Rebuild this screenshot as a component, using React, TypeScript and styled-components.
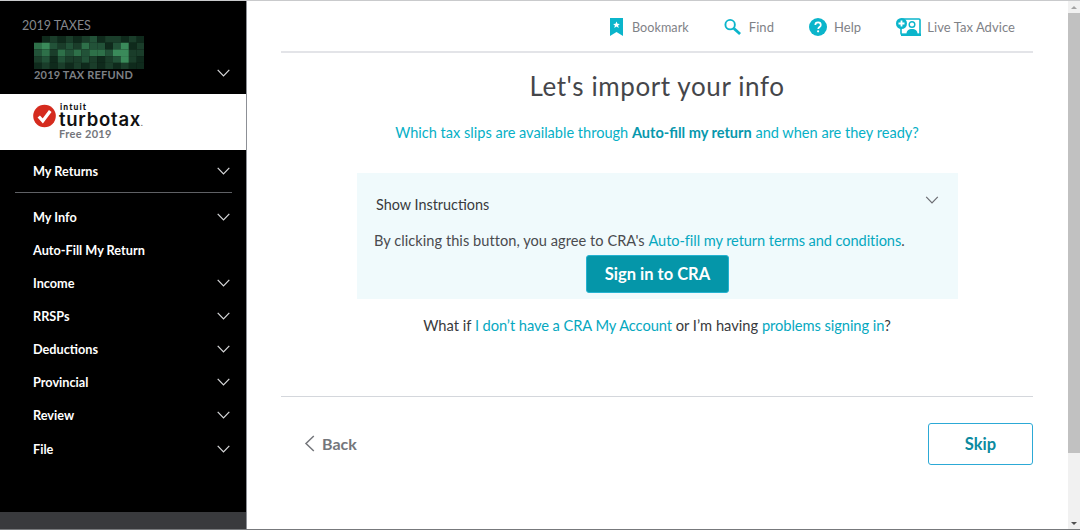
import React from "react";
import styled, { createGlobalStyle } from "styled-components";

const Global = createGlobalStyle`
  html, body { margin: 0; padding: 0; height: 100%; overflow: hidden; background: #fff; }
  #root { height: 100%; }
  * { box-sizing: border-box; }
`;

const Page = styled.div`
  width: 1080px; height: 530px; display: flex;
  border-top: 1px solid #c9cacc; border-bottom: 1px solid #77797c;
  font-family: "Lato", "Liberation Sans", sans-serif; color: #393a3d;
`;
const Sidebar = styled.aside`
  width: 247px; flex: none; background: #000; display: flex; flex-direction: column;
  border-right: 1px solid #8d9096;
`;
const Summary = styled.div`
  height: 93px; position: relative; padding: 17px 0 0 22px; color: #85888d;
  font-size: 12.5px; line-height: 16px; font-weight: 400;
`;
const Mosaic = styled.svg`
  position: absolute; left: 34px; top: 35px; z-index: 1; filter: blur(0.7px);
`;
const RefundRow = styled.div`
  position: absolute; left: 34px; right: 16px; top: 66px; height: 16px;
  display: flex; align-items: center; justify-content: space-between;
  font-size: 11px; letter-spacing: 0.2px; color: #7d8085; font-weight: 700;
`;
const RefundChevron = styled.span`
  display: flex; margin-top: -4px;
`;
const LogoBar = styled.div`
  height: 56px; background: #fff; display: flex; padding: 9px 0 0 33px; gap: 3px;
`;
const LogoText = styled.div`
  display: flex; flex-direction: column; color: #111;
`;
const Intuit = styled.span`
  font-size: 8.5px; line-height: 8px; font-weight: 900; letter-spacing: 1.1px; margin-left: 1px;
`;
const Turbo = styled.span`
  font-family: "Inter", sans-serif;
  font-size: 18.5px; line-height: 14px; font-weight: 600; letter-spacing: 0.75px; margin-top: 1px;
  small { font-size: 8px; color: #74767b; letter-spacing: 0; margin-left: -0.5px; }
`;
const Free = styled.span`
  font-size: 11px; line-height: 13px; font-weight: 700; color: #74767b; letter-spacing: 0.35px; margin-top: -3px;
`;
const Nav = styled.nav`
  flex: 1; display: flex; flex-direction: column; padding: 4px 14px 0 15px;
`;
const NavRow = styled.div<{ $first?: boolean }>`
  height: 33.14px; flex: none; display: flex; align-items: center; justify-content: space-between;
  padding: 0 2px 0 18px; color: #fff; font-size: 12.7px; font-weight: 700;
  ${(p) => (p.$first ? "margin-bottom: 5px;" : "")}
`;
const Divider = styled.div`
  height: 1px; flex: none; background: #5f6165; margin-bottom: 7px;
`;
const SideFoot = styled.div`
  height: 17px; background: #393a3d;
`;
const Main = styled.main`
  flex: 1; min-width: 0; display: flex; flex-direction: column; padding: 0 35px 0 34px; background: #fff;
`;
const TopBar = styled.header`
  height: 52px; flex: none; display: flex; align-items: center; justify-content: flex-end;
  border-bottom: 2px solid #e3e4e8; padding: 2px 18px 0 0; gap: 35px; font-size: 13px;
  color: #7f8287;
`;
const TopItem = styled.div<{ $gap: number; $size?: number }>`
  display: flex; align-items: center; gap: ${(p) => p.$gap}px; letter-spacing: 0.06px;
  font-size: ${(p) => p.$size ?? 13}px;
`;
const Title = styled.h1`
  margin: 17px 0 0; font-size: 26px; line-height: 32px; font-weight: 400; text-align: center; color: #45464a;
  letter-spacing: 0.6px;
`;
const Lead = styled.p`
  margin: 21px 0 0; text-align: center; font-size: 14.55px; line-height: 20px; color: #06b0c6;
  b { font-weight: 700; color: #0898ad; }
`;
const Panel = styled.section`
  margin: 30px 75px 0 76px; height: 126px; background: #f0fafc; display: flex; flex-direction: column;
  align-items: center; position: relative; padding-top: 22px;
`;
const PanelHead = styled.div`
  align-self: stretch; padding-left: 19px; font-size: 14.4px; line-height: 20px; color: #393a3d;
`;
const ChevronSpot = styled.div`
  position: absolute; right: 19px; top: 23px; display: flex;
`;
const Agree = styled.p`
  margin: 16px 0 0; align-self: flex-start; padding-left: 17px; font-size: 14.6px; line-height: 20px; color: #4a4b4f;
  white-space: nowrap; letter-spacing: 0.04px;
`;
const A = styled.span`
  color: #06a8bf; letter-spacing: -0.08px;
`;
const SignIn = styled.button`
  margin-top: 4px; width: 143px; height: 38px; background: #0596a9; border: 1px solid #25b2d0; border-radius: 3px;
  color: #fff; font: 700 16.5px "Lato", sans-serif; padding: 0;
`;
const Help = styled.p`
  margin: 16px 0 0; text-align: center; font-size: 14.7px; line-height: 20px; color: #393a3d;
`;
const Footer = styled.footer`
  margin-top: 61px; border-top: 1px solid #d4d7dc; padding: 26px 0 0 23px; display: flex;
  align-items: center; justify-content: space-between;
`;
const Back = styled.div`
  display: flex; align-items: center; gap: 7px; color: #74767b; font-size: 16px; font-weight: 700;
  position: relative; top: -1px;
`;
const Skip = styled.button`
  width: 105px; height: 42px; background: #fff; border: 1px solid #2ca9d6; border-radius: 3px;
  color: #0c8aa0; font: 700 16.5px "Lato", sans-serif; padding: 0;
`;
const Scrollbar = styled.div`
  width: 12px; flex: none; background: #f1f1f1; display: flex; flex-direction: column; align-items: center;
`;
const Arrow = styled.div<{ $up?: boolean }>`
  height: 12px; flex: none; display: flex; align-items: center; justify-content: center;
  &::before { content: ""; border-left: 3px solid transparent; border-right: 3px solid transparent;
    ${(p) => (p.$up ? "border-bottom: 3px solid #a3a3a3;" : "border-top: 3px solid #505050;")} }
`;
const Thumb = styled.div`
  width: 100%; height: 440px; background: #c1c1c1;
`;
const Track = styled.div`
  flex: 1;
`;

const Chevron = ({ color = "#d8d9db", w = 13 }: { color?: string; w?: number }) => (
  <svg width={w} height={8} viewBox="0 0 13 8" fill="none" stroke={color} strokeWidth="1.2">
    <path d="M.7.8 6.5 6.8 12.3.8" />
  </svg>
);

const T = "#0bb5cb";
const greens = [
  "01212123122121",
  "45323243313512",
  "34243434435522",
  "23132232123521",
  "12121212121211",
];
const shade = ["#000000", "#0f2a1c", "#1a3d2a", "#225238", "#2e7049", "#3a8a5a"];

const rows = ["My Info", "Auto-Fill My Return", "Income", "RRSPs", "Deductions", "Provincial", "Review", "File"];

export default function App() {
  return (
    <Page>
      <Global />
      <Sidebar>
        <Summary>
          2019 TAXES
          <Mosaic width="110" height="33" viewBox="0 0 110 33">
            {greens.map((r, y) =>
              r.split("").map((c, x) => (
                <rect key={`${x}-${y}`} x={x * 7.9} y={y * 6.7} width="8" height="6.8" fill={shade[+c]} />
              ))
            )}
          </Mosaic>
          <RefundRow>
            2019 TAX REFUND
            <RefundChevron>
              <Chevron />
            </RefundChevron>
          </RefundRow>
        </Summary>
        <LogoBar>
          <svg width="23" height="24" viewBox="0 0 24 24" style={{ marginTop: 1, flex: "none" }}>
            <circle cx="12" cy="12" r="11.8" fill="#d52b1e" />
            <path d="M6 12.5l4.200 4.600L18 6.800" fill="none" stroke="#fff" strokeWidth="3.4" />
          </svg>
          <LogoText>
            <Intuit>intuit</Intuit>
            <Turbo>
              turbotax<small>.</small>
            </Turbo>
            <Free>Free 2019</Free>
          </LogoText>
        </LogoBar>
        <Nav>
          <NavRow $first>
            My Returns
            <Chevron />
          </NavRow>
          <Divider />
          {rows.map((r) => (
            <NavRow key={r}>
              {r}
              {r !== "Auto-Fill My Return" && <Chevron />}
            </NavRow>
          ))}
        </Nav>
        <SideFoot />
      </Sidebar>
      <Main>
        <TopBar>
          <TopItem $gap={9} $size={12.6}>
            <svg width="13" height="18" viewBox="0 0 13 18">
              <path fill={T} fillRule="evenodd" d="M0 0h13v18l-6.500-4L0 18zM6.500 3.400l-1 2.300-2.400.2 1.800 1.600-.6 2.400 2.200-1.300 2.200 1.300-.6-2.400 1.800-1.600-2.400-.2z" />
            </svg>
            Bookmark
          </TopItem>
          <TopItem $gap={8}>
            <svg width="17" height="18" viewBox="0 0 18 18" fill="none" stroke={T}>
              <circle cx="6.500" cy="6.500" r="5" strokeWidth="2" />
              <path d="M10.500 10.500 17 16.500" strokeWidth="3" />
            </svg>
            Find
          </TopItem>
          <TopItem $gap={7}>
            <svg width="18" height="18" viewBox="0 0 18 18">
              <circle cx="9" cy="9" r="9" fill={T} />
              <path d="M6.300 7c0-1.600 1.200-2.600 2.800-2.600S11.800 5.400 11.800 7c0 2-2.500 2-2.600 4" fill="none" stroke="#fff" strokeWidth="1.7" />
              <circle cx="9.100" cy="13.300" r="1.100" fill="#fff" />
            </svg>
            Help
          </TopItem>
          <TopItem $gap={6}>
            <svg width="25" height="18" viewBox="0 0 25 18" fill="none">
              <rect x="5" y="1" width="19" height="15.500" rx="1" stroke={T} strokeWidth="1.6" />
              <path d="M5 15.500h20V18H5z" fill={T} />
              <circle cx="5.500" cy="5.500" r="5.500" fill={T} />
              <path d="M5.500 2.500v6M2.500 5.500h6" stroke="#fff" strokeWidth="1.8" />
              <circle cx="16" cy="6.500" r="2.800" stroke={T} strokeWidth="1.4" />
              <path d="M10.500 16c0-3.500 2-5 5.500-5s5.500 1.500 5.500 5z" fill={T} />
            </svg>
            Live Tax Advice
          </TopItem>
        </TopBar>
        <Title>Let's import your info</Title>
        <Lead>
          Which tax slips are available through <b>Auto-fill my return</b> and when are they ready?
        </Lead>
        <Panel>
          <PanelHead>Show Instructions</PanelHead>
          <ChevronSpot>
            <Chevron color="#6b6c72" w={14} />
          </ChevronSpot>
          <Agree>
            By clicking this button, you agree to CRA's <A>Auto-fill my return terms and conditions</A>.
          </Agree>
          <SignIn>Sign in to CRA</SignIn>
        </Panel>
        <Help>
          What if <A>I don’t have a CRA My Account</A> or I’m having <A>problems signing in</A>?
        </Help>
        <Footer>
          <Back>
            <svg width="11" height="17" viewBox="0 0 11 17" fill="none" stroke="#74767b" strokeWidth="1.5">
              <path d="M9.800 1 2 8.500l7.800 7.500" />
            </svg>
            Back
          </Back>
          <Skip>Skip</Skip>
        </Footer>
      </Main>
      <Scrollbar>
        <Arrow $up />
        <Thumb />
        <Track />
        <Arrow />
      </Scrollbar>
    </Page>
  );
}
